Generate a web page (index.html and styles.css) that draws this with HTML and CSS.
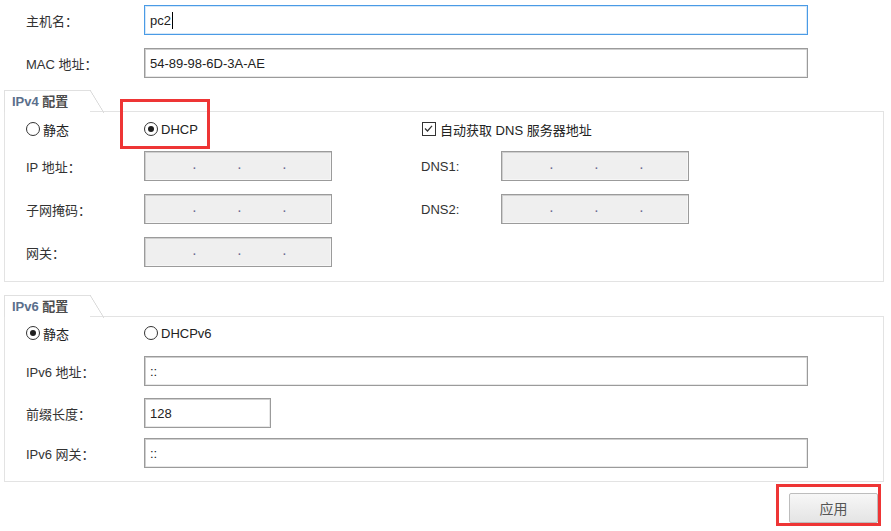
FILE: index.html
```html
<!DOCTYPE html>
<html lang="zh">
<head>
<meta charset="utf-8">
<link rel="stylesheet" href="styles.css">
</head>
<body>
<div class="page">
  <div class="top">
    <div class="frow">
      <span class="lbl">主机名：</span>
      <div class="field field-wide focus"><span>pc2</span><span class="caret"></span></div>
    </div>
    <div class="frow">
      <span class="lbl">MAC 地址：</span>
      <div class="field field-wide"><span>54-89-98-6D-3A-AE</span></div>
    </div>
  </div>

  <div class="group g4">
    <div class="tab"><span class="tab-title"><b class="en">IPv4</b> 配置</span></div>
    <div class="box">
      <div class="grid4">
        <label class="opt c1"><span class="radio"></span>静态</label>
        <label class="opt c2"><span class="radio on"></span>DHCP</label>
        <label class="opt c45"><span class="check"><svg viewBox="0 0 13 13" width="13" height="13"><path d="M3 6.5 L5.5 9 L10 3.8" fill="none" stroke="#333" stroke-width="1.2"/></svg></span>自动获取 DNS 服务器地址</label>

        <span class="lbl c1">IP 地址：</span>
        <div class="field ip c2"><i>.</i><i>.</i><i>.</i></div>
        <span class="lbl c4">DNS1:</span>
        <div class="field ip c5"><i>.</i><i>.</i><i>.</i></div>

        <span class="lbl c1">子网掩码：</span>
        <div class="field ip c2"><i>.</i><i>.</i><i>.</i></div>
        <span class="lbl c4">DNS2:</span>
        <div class="field ip c5"><i>.</i><i>.</i><i>.</i></div>

        <span class="lbl c1">网关：</span>
        <div class="field ip c2"><i>.</i><i>.</i><i>.</i></div>
      </div>
    </div>
  </div>

  <div class="group g6">
    <div class="tab"><span class="tab-title"><b class="en">IPv6</b> 配置</span></div>
    <div class="box">
      <div class="grid6">
        <label class="opt r1"><span class="radio on"></span>静态</label>
        <label class="opt r1"><span class="radio"></span>DHCPv6</label>

        <span class="lbl r2">IPv6 地址：</span>
        <div class="field v6wide r2"><span>::</span></div>

        <span class="lbl r3">前缀长度：</span>
        <div class="field prefix r3"><span>128</span></div>

        <span class="lbl r4">IPv6 网关：</span>
        <div class="field v6wide r4"><span>::</span></div>
      </div>
    </div>
  </div>

  <div class="actions">
    <button class="btn">应用</button>
  </div>

  <div class="mark mark-dhcp"></div>
  <div class="mark mark-btn"></div>
</div>
</body>
</html>
```

FILE: styles.css
```css
html, body {
  margin: 0;
  padding: 0;
  background: #fff;
}
body {
  font-family: "Liberation Sans", "Noto Sans CJK SC", sans-serif;
  font-size: 13px;
  color: #333;
  width: 891px;
  height: 531px;
  overflow: hidden;
}
.page {
  position: relative;
  width: 891px;
  height: 531px;
}
.top {
  padding: 5px 0 0 26px;
  display: flex;
  flex-direction: column;
  gap: 13px;
}
.frow {
  display: flex;
  align-items: center;
  height: 30px;
}
.lbl {
  display: flex;
  align-items: center;
  height: 30px;
  color: #333;
  white-space: nowrap;
}
.frow .lbl {
  width: 118px;
}
.field {
  box-sizing: border-box;
  height: 30px;
  border: 1px solid #9b9b9b;
  box-shadow: inset 1px 1px 0 #cfcfcf, inset -1px -1px 0 #e8e8e8;
  background: #fff;
  display: flex;
  align-items: center;
  padding-left: 5px;
  color: #222;
  font-size: 13px;
}
.field-wide {
  width: 664px;
}
.field.focus {
  border-color: #4a9be6;
  box-shadow: inset 0 0 0 1px #d6e8f8;
}
.caret {
  display: inline-block;
  width: 1px;
  height: 17px;
  background: #000;
  margin-left: 1px;
}
.group {
  margin-left: 4px;
  width: 880px;
}
.g4 {
  margin-top: 12px;
}
.g6 {
  margin-top: 13px;
}
.tab {
  position: relative;
  box-sizing: border-box;
  width: 86px;
  height: 22px;
  border-top: 1px solid #e0e0e0;
  border-left: 1px solid #e0e0e0;
  padding: 3px 0 0 7px;
  margin-bottom: -1px;
  background: #fff;
}
.tab::after {
  content: "";
  position: absolute;
  top: -1px;
  right: -14px;
  width: 14px;
  height: 23px;
  background: linear-gradient(to top right, transparent calc(50% - 0.7px), #dcdcdc calc(50% - 0.2px), #dcdcdc calc(50% + 0.2px), transparent calc(50% + 0.7px));
}
.tab-title {
  font-weight: bold;
  color: #4d4d4d;
  font-size: 13px;
  line-height: 16px;
}
.tab-title .en {
  color: #5b6f8c;
}
.box {
  box-sizing: border-box;
  border: 1px solid #e3e3e3;
}
.g4 .box {
  height: 171px;
  padding: 8px 0 0 21px;
}
.g6 .box {
  height: 166px;
  padding: 7px 0 0 21px;
}
.grid4 {
  display: grid;
  grid-template-columns: 118px 188px 89px 80px 188px;
  grid-template-rows: 18px 30px 30px 30px;
  row-gap: 13px;
}
.c1 { grid-column: 1; }
.c2 { grid-column: 2; }
.c4 { grid-column: 4; }
.c5 { grid-column: 5; }
.c45 { grid-column: 4 / 6; }
.grid6 {
  display: grid;
  grid-template-columns: 118px 1fr;
  grid-template-rows: 18px 14px 30px 12px 30px 10px 30px;
  align-items: center;
}
.r1 { grid-row: 1; }
.r2 { grid-row: 3; }
.r3 { grid-row: 5; }
.r4 { grid-row: 7; }
.opt {
  display: flex;
  align-items: center;
  height: 18px;
  color: #222;
  white-space: nowrap;
}
.radio {
  box-sizing: border-box;
  width: 14px;
  height: 14px;
  border-radius: 50%;
  border: 1px solid #333;
  background: #fff;
  margin-right: 3px;
  position: relative;
  flex: none;
}
.radio.on::after {
  content: "";
  position: absolute;
  left: 3px;
  top: 3px;
  width: 6px;
  height: 6px;
  border-radius: 50%;
  background: #1e1e1e;
}
.c45 {
  padding-left: 1px;
}
.check {
  box-sizing: border-box;
  width: 14px;
  height: 14px;
  border: 1px solid #333;
  margin-right: 4px;
  display: flex;
  flex: none;
}
.check svg {
  display: block;
  margin: -1px;
}
.field.ip {
  width: 188px;
  background: #efefef;
  padding: 0 0 0 48px;
  box-shadow: inset 1px 1px 0 #cfcfcf, inset -1px -1px 0 #f6f6f6;
}
.field.ip i {
  font-style: normal;
  font-weight: bold;
  width: 45px;
  color: #6a6a90;
  font-size: 10px;
  line-height: 1;
}
.v6wide {
  width: 664px;
}
.prefix {
  width: 127px;
}
.actions {
  display: flex;
  justify-content: flex-end;
  padding: 11px 13px 0 0;
}
.btn {
  box-sizing: border-box;
  width: 89px;
  height: 30px;
  border: 1px solid #bdbdbd;
  border-radius: 2px;
  background: linear-gradient(#f7f7f7, #e4e4e4);
  font-family: "Liberation Sans", "Noto Sans CJK SC", sans-serif;
  font-size: 14px;
  color: #555;
  padding: 0;
}
.mark {
  position: absolute;
  box-sizing: border-box;
  border: 3px solid #ee3535;
  pointer-events: none;
}
.mark-dhcp {
  left: 120px;
  top: 99px;
  width: 90px;
  height: 50px;
}
.mark-btn {
  left: 776px;
  top: 484px;
  width: 105px;
  height: 42px;
}
```
